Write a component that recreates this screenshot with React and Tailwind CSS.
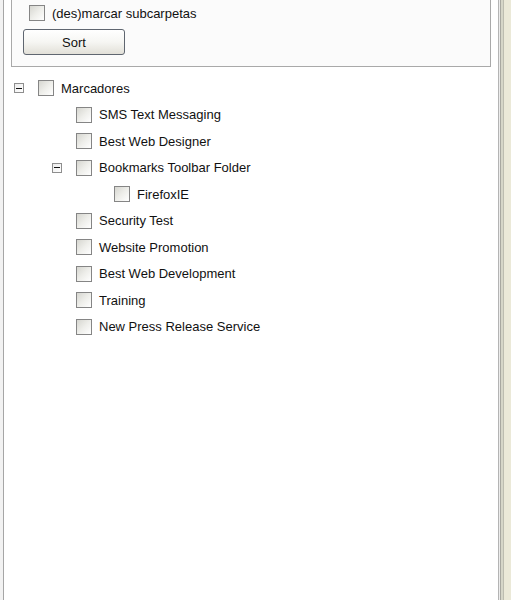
import React, { useState } from "react";

const bookmarks = [
  { name: "Marcadores", level: 0, folder: true },
  { name: "SMS Text Messaging", level: 1 },
  { name: "Best Web Designer", level: 1 },
  { name: "Bookmarks Toolbar Folder", level: 1, folder: true },
  { name: "FirefoxIE", level: 2 },
  { name: "Security Test", level: 1 },
  { name: "Website Promotion", level: 1 },
  { name: "Best Web Development", level: 1 },
  { name: "Training", level: 1 },
  { name: "New Press Release Service", level: 1 },
];

// indentation per tree level
const indent = {
  0: "pl-[10px]",
  1: "pl-[48px]",
  2: "pl-[86px]",
};

const CheckBox = ({ checked, onClick }) => (
  <span
    onClick={onClick}
    className="w-4 h-4 shrink-0 border border-[#858585] bg-gradient-to-br from-[#d6d6d0] via-[#eeeeea] to-white flex items-center justify-center"
  >
    {checked && <span className="w-2 h-2 bg-[#333]" />}
  </span>
);

const Toggle = () => (
  <span className="w-[10px] h-[10px] border border-[#8e8e8e] bg-gradient-to-br from-[#ececec] to-white flex items-center justify-center">
    <span className="w-[6px] h-px bg-[#111]" />
  </span>
);

const App = () => {
  const [subfolders, setSubfolders] = useState(false);
  const [checked, setChecked] = useState({});

  return (
    <div
      className="w-[511px] h-[600px] flex bg-white text-[13px] text-[#111] overflow-hidden"
      style={{ fontFamily: '"Liberation Sans", Arial, sans-serif' }}
    >
      {/* left frame */}
      <div className="w-[3px] bg-[#f2f2f2]" />
      <div className="w-px bg-[#a6a6a6]" />

      <div className="flex-1 flex flex-col">
        {/* options panel */}
        <div className="ml-[7px] w-[480px] h-[67px] bg-[#fbfbfb] border-l border-r border-b border-[#a9a9a9] flex flex-col">
          <div className="flex items-center h-[16px] mt-[5px] pl-[17px]">
            <CheckBox
              checked={subfolders}
              onClick={() => setSubfolders(!subfolders)}
            />
            <span className="ml-[7px] leading-none">(des)marcar subcarpetas</span>
          </div>
          <button className="ml-[11px] mt-[8px] w-[102px] h-[26px] rounded-[3px] border border-[#5f6670] bg-gradient-to-b from-white via-[#f6f6f3] to-[#e2e0d8] leading-none">
            Sort
          </button>
        </div>

        {/* bookmark tree */}
        <div className="pt-[8px] flex flex-col">
          {bookmarks.map((b) => (
            <div
              key={b.name}
              className={`h-[26.5px] flex items-center ${indent[b.level]}`}
            >
              <span className="w-[24px] shrink-0 flex items-center">
                {b.folder && <Toggle />}
              </span>
              <CheckBox
                checked={checked[b.name]}
                onClick={() =>
                  setChecked({ ...checked, [b.name]: !checked[b.name] })
                }
              />
              <span className="ml-[7px] leading-none">{b.name}</span>
            </div>
          ))}
        </div>
      </div>

      {/* right frame */}
      <div className="w-px bg-[#b4b4b4]" />
      <div className="w-px bg-[#ececec]" />
      <div className="w-px bg-[#a8a8a0]" />
      <div className="w-[2px] bg-[#d6d6c8]" />
      <div className="w-px bg-[#bdbdb0]" />
      <div className="w-[7px] bg-[#ebe9d8]" />
    </div>
  );
};

export default App;
